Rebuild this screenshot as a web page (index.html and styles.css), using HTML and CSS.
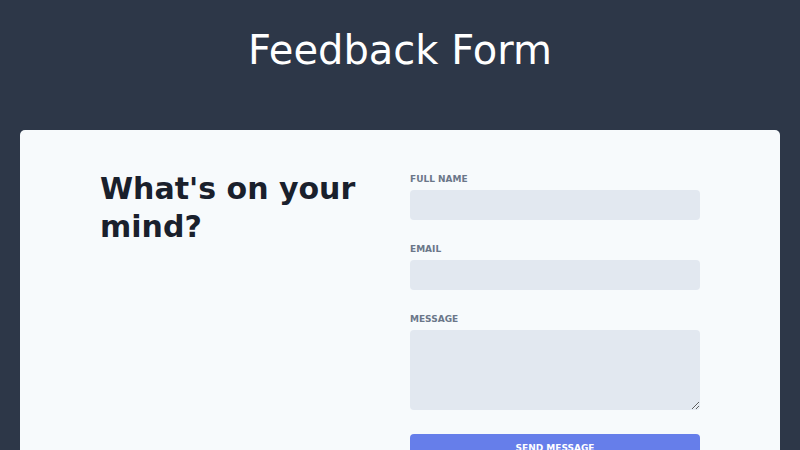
FILE: index.html
```html
<!DOCTYPE html>
<html lang="en">
<head>
<meta charset="utf-8">
<title>Feedback Form</title>
<link rel="stylesheet" href="styles.css">
</head>
<body>
<header class="page-header">
  <h1 class="page-title">Feedback Form</h1>
</header>
<main class="card">
  <div class="card-inner">
    <div class="intro">
      <h2 class="intro-title">What's on your mind?</h2>
    </div>
    <form class="form">
      <div class="field">
        <label class="field-label" for="name">Full Name</label>
        <input class="field-input" id="name" type="text">
      </div>
      <div class="field">
        <label class="field-label" for="email">Email</label>
        <input class="field-input" id="email" type="email">
      </div>
      <div class="field">
        <label class="field-label" for="message">Message</label>
        <textarea class="field-input field-textarea" id="message"></textarea>
      </div>
      <button class="submit" type="button">Send Message</button>
    </form>
  </div>
</main>
</body>
</html>
```

FILE: styles.css
```css
* { box-sizing: border-box; }

html, body {
  margin: 0;
  padding: 0;
  background: #2d3748;
  font-family: "DejaVu Sans", sans-serif;
}

.page-header {
  padding: 27px 0 56px;
  text-align: center;
}

.page-title {
  margin: 0;
  font-size: 40px;
  font-weight: normal;
  line-height: 47px;
  color: #ffffff;
}

.card {
  margin: 0 20px;
  background: #f7fafc;
  border-radius: 5px;
  padding: 40px 80px 60px;
  min-height: 400px;
}

.card-inner {
  display: grid;
  grid-template-columns: 290px 290px;
  column-gap: 20px;
}

.intro-title {
  margin: 0;
  font-size: 30px;
  font-weight: bold;
  line-height: 37.5px;
  color: #1a202c;
}

.form {
  display: flex;
  flex-direction: column;
}

.field {
  display: flex;
  flex-direction: column;
  margin-bottom: 20px;
}

.field-label {
  display: block;
  font-size: 9px;
  font-weight: bold;
  line-height: 15px;
  text-transform: uppercase;
  color: #6b7789;
  padding-top: 2px;
  margin-bottom: 3px;
}

.field-input {
  display: block;
  width: 100%;
  height: 30px;
  border: none;
  border-radius: 4px;
  background: #e2e8f0;
  font-family: inherit;
  font-size: 12px;
  padding: 0 10px;
  margin: 0;
  outline: none;
}

.field-textarea {
  height: 80px;
  padding: 8px 10px;
}

.submit {
  margin-top: 4px;
  height: 28px;
  width: 100%;
  border: none;
  border-radius: 4px;
  background: #667eea;
  color: #ffffff;
  font-family: inherit;
  font-size: 9px;
  font-weight: bold;
  text-transform: uppercase;
  padding: 0;
}
```
